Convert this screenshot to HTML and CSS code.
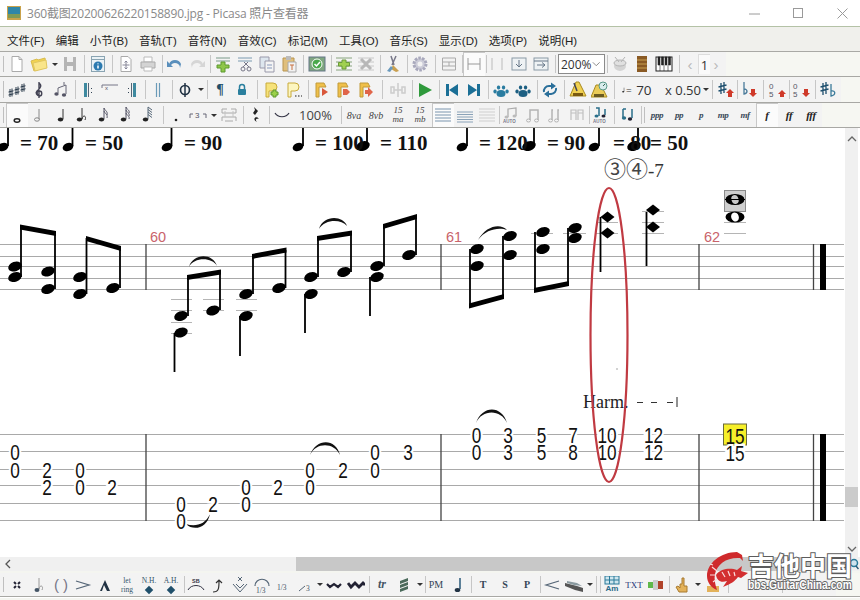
FILE: index.html
```html
<!DOCTYPE html>
<html lang="zh">
<head>
<meta charset="utf-8">
<title>Picasa 照片查看器</title>
<link rel="stylesheet" href="styles.css">
</head>
<body>
<svg class="defs" width="0" height="0">
  <defs>
    <ellipse id="h" rx="7" ry="4.700" transform="rotate(-20)"/>
    <ellipse id="hs" rx="5.500" ry="4" transform="rotate(-20)"/>
    <path id="d" d="M0-5.500 7 0 0 5.500-7 0Z"/>
    <path id="tn" d="M9 3v10.500" stroke="#888" fill="none"/>
  </defs>
</svg>
<div class="app">
  <header class="title">
    <svg class="appicon" viewBox="0 0 14 14"><rect width="14" height="14" fill="#c9a24a"/><rect x="1" y="1" width="12" height="7" fill="#2f86a8"/><rect x="1" y="8" width="12" height="4" fill="#7f9a55"/></svg>
    <span class="titletext">360截图20200626220158890.jpg - Picasa 照片查看器</span>
    <div class="winbtns">
      <svg viewBox="0 0 11 11"><path d="M0 6h11" /></svg>
      <svg viewBox="0 0 11 11"><rect x=".5" y=".5" width="9" height="9"/></svg>
      <svg viewBox="0 0 11 11"><path d="M.5.5l10 10M10.500.5l-10 10"/></svg>
    </div>
  </header>
  <nav class="menu">
    <span>文件(F)</span><span>编辑</span><span>小节(B)</span><span>音轨(T)</span><span>音符(N)</span><span>音效(C)</span><span>标记(M)</span><span>工具(O)</span><span>音乐(S)</span><span>显示(D)</span><span>选项(P)</span><span>说明(H)</span>
  </nav>

  <!-- toolbar 1 -->
  <div class="row"><div class="tb">
    <i class="grip"></i>
    <b class="c"><svg viewBox="0 0 18 18"><path d="M4 1.500h7l3 3v12H4z" fill="#fff" stroke="#aaa"/><path d="M11 1.500v3h3" fill="none" stroke="#aaa"/></svg></b>
    <b class="c"><svg viewBox="0 0 18 18"><path d="M1 6l6-2 1 1 7-2 1 9-12 4z" fill="#f2d34f" stroke="#d8bc50"/><path d="M3 8l13-3 1 8-12 3z" fill="#f9e58a" stroke="#e0c660"/></svg></b>
    <b class="ar"></b>
    <b class="c"><svg viewBox="0 0 18 18"><path d="M3 2h12v14H3z" fill="#b4b4b4"/><path d="M6 2h6v5H6zM6 11h6v5H6z" fill="#f0f0f0"/></svg></b>
    <i class="s s6"></i>
    <b class="c"><svg viewBox="0 0 18 18"><rect x="2.500" y="1.500" width="13" height="15" fill="#eaf2f6" stroke="#8aa4b2"/><path d="M2.500 4.500h13" stroke="#8aa4b2"/><circle cx="9" cy="11" r="4.500" fill="#2b7ab0"/><path d="M9 8.500v.8M9 10.500v3" stroke="#fff" stroke-width="1.500"/></svg></b>
    <i class="s s6"></i>
    <b class="c"><svg viewBox="0 0 18 18"><path d="M4 1.500h7l3 3v12H4z" fill="#fff" stroke="#aaa"/><path d="M9 6v8M5.500 10h7M7.500 7.500 9 6l1.500 1.500M7.500 12.500 9 14l1.500-1.500" fill="none" stroke="#889"/></svg></b>
    <b class="c"><svg viewBox="0 0 18 18"><path d="M5 2h8v5H5z" fill="#fff" stroke="#bbb"/><path d="M2 7h14v6H2z" fill="#d4d4d4" stroke="#aaa"/><path d="M5 12h8v4H5z" fill="#fff" stroke="#bbb"/></svg></b>
    <i class="s s5"></i>
    <b class="c"><svg viewBox="0 0 18 18"><path d="M3 9a6.500 6.500 0 0 1 12 0l-1 4a5 5 0 0 0-9-3l2 2H1V6l2 2" fill="#5a8fbc"/></svg></b>
    <b class="c"><svg viewBox="0 0 18 18"><path d="M15 9a6.500 6.500 0 0 0-12 0l1 4a5 5 0 0 1 9-3l-2 2h6V6l-2 2" fill="#d6d6d6"/></svg></b>
    <i class="s s4"></i>
    <b class="c"><svg viewBox="0 0 18 18"><path d="M2 3h14M2 6h14" stroke="#7a9a8a"/><path d="M7 7h4v3h4v3h-4v4H7v-4H3v-3h4z" fill="#8ec64a" stroke="#5d9a30"/></svg></b>
    <b class="c"><svg viewBox="0 0 18 18"><path d="M2 3h14M2 6h14" stroke="#7a9ab0"/><circle cx="7" cy="14" r="2" fill="none" stroke="#778"/><circle cx="13" cy="14" r="2" fill="none" stroke="#778"/><path d="M7 12 12 7M13 12 8 7" stroke="#778"/></svg></b>
    <b class="c"><svg viewBox="0 0 18 18"><path d="M2 2h9v11H2z" fill="#dde6ee" stroke="#99a"/><path d="M7 6h9v11H7z" fill="#f4f4f4" stroke="#99a"/><path d="M9 10h5M9 13h5" stroke="#89b"/></svg></b>
    <b class="c"><svg viewBox="0 0 18 18"><path d="M3 3h11v13H3z" fill="#e0bf7c" stroke="#b89550"/><path d="M6 1h5v4H6z" fill="#bbb"/><path d="M8 7h8v10H8z" fill="#f2f2f2" stroke="#aaa"/><path d="M10 10h4M12 10v5" stroke="#c87040"/></svg></b>
    <i class="s s6"></i>
    <b class="c"><svg viewBox="0 0 18 18"><rect x="1" y="2" width="16" height="14" fill="#7fa680" stroke="#678"/><circle cx="9" cy="9" r="5" fill="#4aa84a" stroke="#fff"/><path d="M6.500 9 8.500 11 12 7" fill="none" stroke="#fff" stroke-width="1.500"/></svg></b>
    <i class="s s5"></i>
    <b class="c"><svg viewBox="0 0 18 18"><path d="M1 3h16M1 7h16M1 11h16M1 15h16" stroke="#88a47e"/><path d="M7 5h4v2.500h3.500v3.500H11v3H7v-3H3.500V7.500H7z" fill="#a0d050" stroke="#6a9a3a"/></svg></b>
    <b class="c"><svg viewBox="0 0 18 18"><path d="M1 3h16M1 7h16M1 11h16M1 15h16" stroke="#c8c8c8"/><path d="M4 4l10 10M14 4 4 14" stroke="#b8b8b8" stroke-width="3"/></svg></b>
    <i class="s s5"></i>
    <b class="c"><svg viewBox="0 0 18 18"><path d="M7 1l3 9M12 1 8 10" stroke="#778" stroke-width="1.500"/><path d="M9 10l6 6-3 1-5-3z" fill="#c9a050"/><path d="M7 11 3 16l3 1 3-4z" fill="#6a9abd"/></svg></b>
    <i class="s s5"></i>
    <b class="c"><svg viewBox="0 0 18 18"><circle cx="9" cy="9" r="6" fill="#ccccd8" stroke="#a8a8bc" stroke-width="3" stroke-dasharray="2.500 1.200"/><circle cx="9" cy="9" r="2.500" fill="#f2f2f2"/></svg></b>
    <i class="s s7"></i>
    <b class="c"><svg viewBox="0 0 18 18"><path d="M2.500 3h13v12h-13zM2.500 7h13M2.500 11h13M9 7v4" fill="#f2f2f2" stroke="#aaa"/></svg></b>
    <i class="s s3"></i>
    <b class="c on"><svg viewBox="0 0 18 18"><path d="M3 3v12M15 3v12M3 9h12" fill="none" stroke="#999"/></svg></b>
    <i class="s s1"></i>
    <b class="c"><svg viewBox="0 0 18 18"><path d="M4 3v12M14 3v12" fill="none" stroke="#bbb"/></svg></b>
    <b class="c"><svg viewBox="0 0 18 18"><rect x="2" y="3" width="14" height="12" fill="#eef2f4" stroke="#8a9aa6"/><path d="M9 5v7M6 9l3 3 3-3" fill="none" stroke="#678"/></svg></b>
    <b class="c"><svg viewBox="0 0 18 18"><rect x="2" y="3" width="14" height="12" fill="#eef2f4" stroke="#8a9aa6"/><path d="M2 6h14M5 10h8M10 7.500 13 10l-3 2.500" fill="none" stroke="#678"/></svg></b>
    <i class="s s6"></i>
    <span class="combo">200%<svg viewBox="0 0 10 6"><path d="M1 1l4 4 4-4" fill="none" stroke="#777"/></svg></span>
    <i class="s s4"></i>
    <b class="c"><svg viewBox="0 0 18 18"><ellipse cx="9" cy="11" rx="6" ry="5" fill="#d4d4d4"/><ellipse cx="9" cy="8" rx="6" ry="3" fill="#e0e0e0" stroke="#b4b4b4"/><path d="M4 2l4 5M14 2l-4 5" stroke="#b4b4b4"/></svg></b>
    <b class="c"><svg viewBox="0 0 18 18"><rect x="4" y="1" width="10" height="16" fill="#8a5a24"/><path d="M4 5h10M4 9h10M4 13h10" stroke="#c8a050"/></svg></b>
    <b class="c"><svg viewBox="0 0 18 18"><rect x="1" y="2" width="16" height="14" fill="#fff" stroke="#222"/><path d="M3 2h2v8H3zM6.500 2h2v8h-2zM10 2h2v8h-2zM13.500 2h2v8h-2zM5 10v6M9 10v6M13 10v6" fill="#222" stroke="#222" stroke-width=".6"/></svg></b>
    <i class="s s7"></i>
    <span class="pg">‹</span><span class="pgn">1</span><span class="pg">›</span>
  </div></div>

  <!-- toolbar 2 -->
  <div class="row mid"><div class="tb t2">
    <i class="grip"></i>
    <b class="c"><svg viewBox="0 0 18 18" class="shp"><path d="M2 8v8M4 7.500v8M.5 11l5-1.200M.5 14l5-1.200M8 6v8M10 5.500v8M6.500 9l5-1.200M6.500 12l5-1.200M14 3v8M16 2.500v8M12.500 6l5-1.200M12.500 9l5-1.200"/></svg></b>
    <b class="c"><svg viewBox="0 0 18 18"><path d="M9 1v16M9 2c3 2 2 5-2 8-2 2 0 5 2.500 5 3 0 3-5 0-5s-3 3-1 4" fill="none" stroke="#445" stroke-width="1.400"/></svg></b>
    <b class="c"><svg viewBox="0 0 18 18"><path d="M6 12V7l8-3v9M12 1v3" fill="none" stroke="#667"/><ellipse cx="4.500" cy="13" rx="2.200" ry="1.700" fill="#556"/><ellipse cx="12" cy="14" rx="2.200" ry="1.700" fill="#556"/></svg></b>
    <i class="s s5"></i>
    <b class="c"><svg viewBox="0 0 18 18"><path d="M5 2h3v14H5z" fill="#3f8aa0"/><path d="M9.500 2v14" stroke="#567"/><path d="M12 7h1v1h-1zM12 11h1v1h-1z" fill="#345"/></svg></b>
    <b class="c"><svg viewBox="0 0 18 18"><path d="M1 7V4h16" fill="none" stroke="#778"/><text x="4" y="9" class="ti">x</text></svg></b>
    <b class="c"><svg viewBox="0 0 18 18"><path d="M10 2h3v14h-3z" fill="#3f8aa0"/><path d="M8.500 2v14" stroke="#567"/><path d="M5 7h1v1H5zM5 11h1v1H5z" fill="#345"/></svg></b>
    <i class="s s4"></i>
    <b class="c"><svg viewBox="0 0 18 18"><path d="M7.500 2v14M10.500 2v14" stroke="#6a9ab8" stroke-width="1.200"/></svg></b>
    <i class="s s5"></i>
    <b class="c"><svg viewBox="0 0 18 18"><ellipse cx="9" cy="9" rx="4.500" ry="4.500" fill="none" stroke="#234" stroke-width="1.700"/><path d="M9 2v14" stroke="#234" stroke-width="1.500"/></svg></b>
    <b class="ar"></b>
    <i class="s s4"></i>
    <b class="c g2">¶</b>
    <b class="c"><svg viewBox="0 0 18 18"><path d="M6.500 8V6a2.500 2.500 0 0 1 5 0v2" fill="none" stroke="#2a7f9e" stroke-width="1.500"/><rect x="5" y="8" width="8" height="6" rx="1" fill="#2a7f9e"/></svg></b>
    <i class="s s8"></i>
    <b class="c"><svg viewBox="0 0 18 18"><path d="M3 2h7a3.500 3.500 0 0 1 0 8H6v6H3z" fill="#f6e27a" stroke="#c8aa3a"/><path d="M10 9h3v2h2v3h-2v2h-3v-2H8v-3h2z" fill="#9ad04a" stroke="#5f982e"/></svg></b>
    <b class="c"><svg viewBox="0 0 18 18"><path d="M3 2h7a3.500 3.500 0 0 1 0 8H6v6H3z" fill="#fdf6c0" stroke="#c8aa3a"/><path d="M10 15h1.500M13 15h1.500M16 15h1" stroke="#666" stroke-width="1.500"/></svg></b>
    <i class="s s6"></i>
    <b class="c"><svg viewBox="0 0 18 18"><path d="M3 2h8l2 4H6v10H3z" fill="#f0c04a" stroke="#c09a3a"/><path d="M9 7l6 4-6 4z" fill="#d9573a"/></svg></b>
    <b class="c"><svg viewBox="0 0 18 18"><path d="M3 2h8l2 4H6v10H3z" fill="#f0c04a" stroke="#c09a3a"/><path d="M8 8h4l3 3-3 3H8z" fill="#e0654a"/></svg></b>
    <b class="c"><svg viewBox="0 0 18 18"><path d="M3 2h8l2 4H6v10H3z" fill="#f0c04a" stroke="#c09a3a"/><path d="M8 9h3V6l5 5-5 5v-3H8z" fill="#e0654a"/></svg></b>
    <i class="s s10"></i>
    <b class="c"><svg viewBox="0 0 18 18"><path d="M9 2v14M2 6h3v6H2zM13 6h3v6h-3zM5 9h8" fill="none" stroke="#cccccc" stroke-width="1.500"/></svg></b>
    <i class="s s5"></i>
    <b class="c"><svg viewBox="0 0 18 18"><path d="M3 2l13 7-13 7z" fill="#2f9a3c"/></svg></b>
    <i class="s s5"></i>
    <b class="c"><svg viewBox="0 0 18 18"><path d="M3 3h3v12H3zM15 3v12L6 9z" fill="#1b6f96"/></svg></b>
    <b class="c"><svg viewBox="0 0 18 18"><path d="M12 3h3v12h-3zM3 3v12l9-6z" fill="#1b6f96"/></svg></b>
    <i class="s s5"></i>
    <b class="c"><svg viewBox="0 0 18 18" class="paw"><path d="M3 8.500a1.700 2 0 1 0 .1 0M6.500 4.500a1.700 2 0 1 0 .1 0M11.500 4.500a1.700 2 0 1 0 .1 0M15 8.500a1.700 2 0 1 0 .1 0"/><ellipse cx="9" cy="12.500" rx="4.500" ry="3.500"/></svg></b>
    <b class="c"><svg viewBox="0 0 18 18" class="paw dark"><path d="M3 8.500a1.700 2 0 1 0 .1 0M6.500 4.500a1.700 2 0 1 0 .1 0M11.500 4.500a1.700 2 0 1 0 .1 0M15 8.500a1.700 2 0 1 0 .1 0"/><ellipse cx="9" cy="12.500" rx="4.500" ry="3.500"/></svg></b>
    <i class="s s5"></i>
    <b class="c"><svg viewBox="0 0 18 18"><path d="M3 11a5 5 0 0 1 5-6h3M15 7a5 5 0 0 1-5 6H7" fill="none" stroke="#2a6f9a" stroke-width="2"/><path d="M10 1.500 15 5l-5 3.500zM8 9.500 3 13l5 3.500z" fill="#2a6f9a"/></svg></b>
    <i class="s s6"></i>
    <b class="c"><svg viewBox="0 0 18 18"><path d="M7 1h3l7 14H1z" fill="#f0d050" stroke="#a88a20"/><path d="M4 12h10v3H4z" fill="#7a5a10"/><path d="M8 10 5 2" stroke="#445" stroke-width="1.500"/></svg></b>
    <b class="c"><svg viewBox="0 0 18 18"><path d="M5 4h5l6 12H0z" fill="#eacb58" stroke="#a88a20"/><path d="M3 13h10v3H3z" fill="#6a5a20"/><circle cx="12" cy="5" r="4" fill="#d8ecec" stroke="#5a9a8a"/><path d="M12 5l2-2" stroke="#365"/></svg></b>
    <i class="s s5"></i>
    <span class="tempo"><svg viewBox="0 0 10 20"><ellipse cx="4" cy="16" rx="3.500" ry="2.500" fill="#222"/><path d="M7 16V2" stroke="#222" stroke-width="1.500"/></svg><small>=</small> 70 <span class="x">x 0.50</span><b class="ar"></b></span>
    <i class="s s4"></i>
    <b class="c"><svg viewBox="0 0 18 18"><path d="M5 2v11M8 1v11M2.500 6l8-2M2.500 10l8-2" stroke="#1e4f6e" stroke-width="1.300"/><path d="M14 8l4 4h-2v4h-4v-4h-2z" fill="#cf3a2a"/></svg></b>
    <i class="s s1"></i>
    <b class="c"><svg viewBox="0 0 18 18"><path d="M5 1v12c4-1 4-5 0-5" fill="none" stroke="#4a7a9a" stroke-width="1.300"/><path d="M12 8h4v4h2l-4 4-4-4h2z" fill="#cf3a2a"/></svg></b>
    <i class="s s7"></i>
    <b class="c"><svg viewBox="0 0 18 18"><text x="1" y="8" class="nm">0</text><text x="1" y="16" class="nm">5</text><path d="M14 9l4 4h-2v3h-4v-3h-2z" fill="#cf3a2a"/></svg></b>
    <i class="s s2"></i>
    <b class="c"><svg viewBox="0 0 18 18"><text x="1" y="8" class="nm">0</text><text x="1" y="16" class="nm">5</text><path d="M12 8h4v4h2l-4 4-4-4h2z" fill="#cf3a2a"/></svg></b>
    <i class="s s5"></i>
    <b class="c"><svg viewBox="0 0 18 18"><path d="M4 2v12M7 1v12M1.500 6l8-2M1.500 10l8-2" stroke="#1e4f6e" stroke-width="1.300"/><path d="M12 3v12c5-1 5-6 0-5" fill="none" stroke="#3a7a9a" stroke-width="1.300"/></svg></b>
  </div></div>

  <!-- toolbar 3 -->
  <div class="row"><div class="tb t3">
    <i class="grip tall"></i>
    <b class="c on"><svg viewBox="0 0 18 18"><ellipse cx="9" cy="14.500" rx="2.800" ry="1.700" fill="none" stroke="#222" stroke-width="1.500"/></svg></b>
    <b class="c"><svg viewBox="0 0 18 18"><use href="#tn"/><ellipse cx="7" cy="13.500" rx="2.500" ry="1.700" fill="none" stroke="#888"/></svg></b>
    <b class="c"><svg viewBox="0 0 18 18"><path d="M11 3v10" stroke="#333"/><ellipse cx="8.500" cy="13.500" rx="2.700" ry="2" fill="#222"/></svg></b>
    <b class="c"><svg viewBox="0 0 18 18"><path d="M8 2v11c1-5 5-3 3 1" fill="none" stroke="#333"/><ellipse cx="5.500" cy="13.500" rx="2.700" ry="2" fill="#222"/></svg></b>
    <b class="c"><svg viewBox="0 0 18 18"><path d="M8 2v11M8 2c1 3 4 3 3 7M8 5c1 3 4 3 3 7" fill="none" stroke="#556"/><ellipse cx="5.500" cy="13.500" rx="2.700" ry="2" fill="#222"/></svg></b>
    <b class="c"><svg viewBox="0 0 18 18"><path d="M8 1v12M8 1c1 3 4 3 3 6M8 4c1 3 4 3 3 6M8 7c1 3 4 3 3 6" fill="none" stroke="#556"/><ellipse cx="5.500" cy="13.500" rx="2.700" ry="2" fill="#222"/></svg></b>
    <b class="c"><svg viewBox="0 0 18 18"><path d="M8 1v12M8 1l4 3M8 3.500l4 3M8 6l4 3M8 8.500l4 3" fill="none" stroke="#567"/><ellipse cx="5.500" cy="13.500" rx="2.700" ry="2" fill="#222"/></svg></b>
    <i class="s s5"></i>
    <b class="c"><svg viewBox="0 0 18 18"><circle cx="9" cy="14" r="1.300" fill="#222"/></svg></b>
    <b class="c"><svg viewBox="0 0 18 18"><path d="M1 12V8h3M14 8h3v4" fill="none" stroke="#667"/><text x="6" y="12" class="nm">3</text></svg></b>
    <b class="ar"></b>
    <b class="c"><svg viewBox="0 0 18 18"><path d="M2 3v4h14V3M2 3h5M11 3h5M2 15v-4h14v4M5 15h8" fill="none" stroke="#aaa"/><path d="M5 5v6M13 5v6" stroke="#c4c4c4"/></svg></b>
    <i class="s s5"></i>
    <b class="c"><svg viewBox="0 0 18 18"><path d="M7 1l4 4-3 4 4 4c-3-1-4 1-2 3-4-2-3-5 0-5L6 7l2-3z" fill="#222"/></svg></b>
    <i class="s s4"></i>
    <b class="c"><svg viewBox="0 0 18 18"><path d="M2 7c3 5 11 5 14 0" fill="none" stroke="#334" stroke-width="1.200"/></svg></b>
    <span class="pct">100%</span>
    <i class="s s5"></i>
    <b class="c it">8va</b>
    <b class="c it">8vb</b>
    <b class="c it st"><span>15</span><span>ma</span></b>
    <b class="c it st"><span>15</span><span>mb</span></b>
    <i class="s s1"></i>
    <b class="c on"><svg viewBox="0 0 18 18"><path d="M1 3h16M1 6h16M1 9h16M1 12h16M1 15h16" stroke="#7a95ae"/></svg></b>
    <b class="c"><svg viewBox="0 0 18 18"><path d="M1 6h16M1 8.500h16M1 11h16M1 13.500h16M1 16h16" stroke="#8aa2b8"/></svg></b>
    <b class="c"><svg viewBox="0 0 18 18"><path d="M1 3h16M1 6h16M1 9h16M1 12h16M1 15h16" stroke="#cfcfcf"/></svg></b>
    <i class="s s2"></i>
    <b class="c"><svg viewBox="0 0 18 18"><path d="M6 11V3l8-1v8" fill="none" stroke="#aaa" stroke-width="1.200"/><ellipse cx="4.500" cy="11" rx="2" ry="1.500" fill="#bbb"/><ellipse cx="12.500" cy="10" rx="2" ry="1.500" fill="#bbb"/><text x="1" y="17" class="au">AUTO</text></svg></b>
    <b class="c"><svg viewBox="0 0 18 18"><path d="M6 14V4h8v10" fill="none" stroke="#b4b4b4" stroke-width="1.500"/><ellipse cx="4.500" cy="14.500" rx="2" ry="1.500" fill="none" stroke="#b4b4b4"/><ellipse cx="12.500" cy="14.500" rx="2" ry="1.500" fill="none" stroke="#b4b4b4"/></svg></b>
    <b class="c"><svg viewBox="0 0 18 18"><path d="M6 14V4h1M12 14V4h1" fill="none" stroke="#b4b4b4" stroke-width="1.500"/><ellipse cx="4.500" cy="14.500" rx="2" ry="1.500" fill="none" stroke="#b4b4b4"/><ellipse cx="10.500" cy="14.500" rx="2" ry="1.500" fill="none" stroke="#b4b4b4"/></svg></b>
    <b class="c"><svg viewBox="0 0 18 18"><path d="M3 14V4h5v10M10 14V4h5v10M3 7h5M10 7h5" fill="none" stroke="#c0c0c0" stroke-width="1.200"/></svg></b>
    <i class="s s2"></i>
    <b class="c"><svg viewBox="0 0 18 18"><path d="M4 2h3v8M13 3v6" fill="none" stroke="#2a6f8a" stroke-width="1.500"/><ellipse cx="4.500" cy="10" rx="2" ry="1.500" fill="#2a6f8a"/><ellipse cx="11.500" cy="10" rx="2" ry="1.500" fill="#223"/><text x="1" y="17" class="au">AUTO</text></svg></b>
    <i class="s s4"></i>
    <b class="c"><svg viewBox="0 0 18 18"><path d="M5 3h3M5 3v8M14 3v9" fill="none" stroke="#2a6f8a" stroke-width="1.500"/><ellipse cx="6" cy="12" rx="2.200" ry="1.700" fill="#2a6f8a"/><ellipse cx="12" cy="13" rx="2.200" ry="1.700" fill="#223"/></svg></b>
    <i class="s s6"></i>
    <i class="grip tall small"></i>
    <b class="c dyn">ppp</b>
    <b class="c dyn">pp</b>
    <b class="c dyn">p</b>
    <b class="c dyn">mp</b>
    <b class="c dyn">mf</b>
    <b class="c dyn on big">f</b>
    <b class="c dyn big">ff</b>
    <b class="c dyn big">fff</b>
  </div></div>

  <main class="main">
    <svg class="score" viewBox="0 128 845 429" width="845" height="429">
      <!-- staff -->
      <g class="lines">
        <path d="M0 244.500H844M0 256.500H844M0 266.500H844M0 278.500H844M0 289.500H844"/>
        <path d="M0 434.500H844M0 451.500H844M0 469.500H844M0 485.500H844M0 503.500H844M0 520.500H844"/>
      </g>
      <path class="ledger" d="M171 299.500h21M171 310.500h21M171 322.500h21M171 333.500h21M203 299.500h21M203 310.500h21M236 299.500h21M236 310.500h21M531 233.500h22M563 233.500h23M596 222.500h22M596 233.500h22M642 211.500h22M642 222.500h22M642 233.500h22M724 222.500h22M724 233.500h22"/>
      <path class="bar" d="M146 244v46M441 244v46M699 244v46M813.500 244v46M146 434v87M441 434v87M699 434v87M813.500 434v87"/>
      <path class="thick" d="M820 244h6v46h-6zM820 434h6v87h-6z"/>

      <!-- tempo row -->
      <g class="stem">
        <path d="M8 128v18M72.500 128v18M171.500 128v18M303 128v18M367 128v18M467 128v18M534 128v18M599 128v18M638 128v18"/>
      </g>
      <g class="heads">
        <use href="#hs" x="3" y="147"/><use href="#hs" x="68" y="147"/><use href="#hs" x="167" y="147"/><use href="#hs" x="298" y="147"/><use href="#h" x="363" y="146"/><use href="#hs" x="462" y="147"/><use href="#h" x="529" y="146"/><use href="#hs" x="594" y="147"/><use href="#h" x="634" y="146"/>
      </g>
      <g class="tempo-t">
        <text x="20" y="150">= 70</text><text x="85" y="150">= 50</text><text x="184" y="150">= 90</text><text x="315" y="150">= 100</text><text x="380" y="150">= 110</text><text x="479" y="150">= 120</text><text x="547" y="150">= 90</text><text x="613" y="150">= 80</text><text x="650" y="150">= 50</text>
      </g>
      <text x="604" y="177" class="circ">③④<tspan class="circ2">-7</tspan></text>

      <!-- numbers -->
      <g class="num"><text x="150" y="242">60</text><text x="446" y="242">61</text><text x="704" y="242">62</text></g>

      <!-- stems -->
      <g class="stem">
        <path d="M21 227v50M55 232v57M86.500 238v56M120 247v41M188 277v39M220 272v38M174.500 333v39M253 256v38M285.500 250v38M240 316v40M318 238v39M351 233v39M305 294v39M384 226v40M416 216v39M370 277v39M470 249v58M503 236v60M535 232v58M568 228v55M600.500 217v55M646.500 212v54"/>
      </g>
      <g class="beam">
        <polygon points="20,224.500 56,231 56,236 20,229.500"/>
        <polygon points="86,236 121,246 121,251 86,241"/>
        <polygon points="187,275 221,269.500 221,274.500 187,280"/>
        <polygon points="252,254 286.500,247.500 286.500,252.500 252,259"/>
        <polygon points="317,236 352,230.500 352,235.500 317,241"/>
        <polygon points="383,224 417,214 417,219 383,229"/>
        <polygon points="469,303.500 504,294 504,299 469,308.500"/>
        <polygon points="534,288 569,281 569,286 534,293"/>
      </g>
      <g class="heads">
        <use href="#h" x="15" y="266.500"/><use href="#h" x="15" y="277"/><use href="#h" x="48" y="271.500"/><use href="#h" x="48" y="289"/>
        <use href="#h" x="80" y="277"/><use href="#h" x="80" y="294"/><use href="#h" x="113" y="288"/>
        <use href="#h" x="181" y="316"/><use href="#h" x="181" y="332.500"/><use href="#h" x="213" y="310.500"/>
        <use href="#h" x="246" y="294"/><use href="#h" x="246" y="316"/><use href="#h" x="279" y="288"/>
        <use href="#h" x="311" y="277"/><use href="#h" x="311" y="294"/><use href="#h" x="344" y="272"/>
        <use href="#h" x="377" y="266"/><use href="#h" x="377" y="277"/><use href="#h" x="409" y="255"/>
        <use href="#h" x="477" y="249"/><use href="#h" x="477" y="266"/><use href="#h" x="510" y="236"/><use href="#h" x="510" y="255"/>
        <use href="#h" x="543" y="232"/><use href="#h" x="543" y="249"/><use href="#h" x="575" y="228"/><use href="#h" x="575" y="238"/>
        <use href="#d" x="607.500" y="217"/><use href="#d" x="607.500" y="233"/><use href="#d" x="653" y="210"/><use href="#d" x="653" y="227"/>
      </g>
      <!-- slurs -->
      <g class="slur">
        <path d="M189 267C193 253 213 253 217 266C212 257 194 257 189 267Z"/>
        <path d="M319 229C323 215 343 215 347 226C341 219 325 219 319 229Z"/>
        <path d="M478 240C486 226 500 223 507 230C499 227 486 229 478 240Z"/>
        <path d="M310 455C316 438 336 438 340 455C334 442 316 442 310 455Z"/>
        <path d="M186 524C195 527 205 525 210 514C207 529 193 531 186 524Z"/>
        <path d="M476 423C482 405 502 405 507 423C501 409 482 409 476 423Z"/>
      </g>
      <!-- whole notes -->
      <rect x="724.500" y="190.500" width="21" height="21" class="hl"/>
      <g class="whole">
        <ellipse cx="735" cy="199.500" rx="9.500" ry="5.500"/><ellipse cx="735" cy="217" rx="9.500" ry="5.500"/>
      </g>
      <ellipse class="wholeg" cx="735" cy="199.500" rx="3.500" ry="4.500" transform="rotate(-20 735 199.500)"/>
      <ellipse class="wholew" cx="735" cy="217" rx="3.800" ry="4.600" transform="rotate(-20 735 217)"/>
      <path class="wline" d="M725 199.500h20"/>

      <!-- tab -->
      <rect x="723.500" y="424" width="23" height="21" class="ylw"/>
      <defs>
        <g id="nums">
          <text x="15" y="460">0</text><text x="15" y="478">0</text><text x="47" y="478">2</text><text x="47" y="495">2</text><text x="80" y="478">0</text><text x="80" y="495">0</text><text x="112" y="495">2</text>
          <text x="181" y="512">0</text><text x="181" y="529">0</text><text x="213" y="512">2</text><text x="246" y="495">0</text><text x="246" y="512">0</text><text x="278" y="495">2</text><text x="310" y="478">0</text><text x="310" y="495">0</text><text x="343" y="478">2</text><text x="375" y="460">0</text><text x="375" y="478">0</text><text x="408" y="460">3</text>
          <text x="476.500" y="443">0</text><text x="476.500" y="460">0</text><text x="508" y="443">3</text><text x="508" y="460">3</text><text x="541.500" y="443">5</text><text x="541.500" y="460">5</text><text x="573" y="443">7</text><text x="573" y="460">8</text><text x="607" y="443">10</text><text x="607" y="460">10</text><text x="653.500" y="443">12</text><text x="653.500" y="460">12</text>
          <text x="735" y="461">15</text>
        </g>
      </defs>
      <use href="#nums" class="halo"/>
      <use href="#nums" class="tabn"/>
      <text x="735" y="444" class="tabn hi">15</text>

      <!-- harm -->
      <text x="583" y="408" class="harm">Harm.</text>
      <path class="dash" d="M637 402.500h6M651 402.500h6M667 402.500h6"/>
      <path class="dashv" d="M677 397v10"/>

      <!-- red ellipse -->
      <ellipse cx="609" cy="335" rx="18.500" ry="147" class="ring"/>
      <circle cx="617" cy="369" r=".8" fill="#999"/>
    </svg>
    <div class="vscroll">
      <svg viewBox="0 0 10 6"><path d="M1 5l4-4 4 4" fill="none" stroke="#666" stroke-width="1.300"/></svg>
      <div class="vthumb"></div>
      <svg viewBox="0 0 10 6"><path d="M1 1l4 4 4-4" fill="none" stroke="#666" stroke-width="1.300"/></svg>
    </div>
  </main>

  <div class="hscroll">
    <svg viewBox="0 0 6 10"><path d="M5 1 1 5l4 4" fill="none" stroke="#555" stroke-width="1.300"/></svg>
    <div class="hthumb"></div>
    <svg class="mag" viewBox="0 0 10 12"><circle cx="5" cy="5" r="3.500" fill="#cfe3ee" stroke="#2a7a9a" stroke-width="1.500"/><path d="M7 8l2.500 3" stroke="#2a5a7a" stroke-width="1.500"/></svg>
  </div>

  <!-- bottom toolbar -->
  <div class="row bottom"><div class="tb">
    <i class="grip"></i>
    <b class="c"><svg viewBox="0 0 18 18"><path d="M6 6l2 2M12 6l-2 2M6 12l2-2M12 12l-2-2" stroke="#223" stroke-width="2"/></svg></b>
    <b class="c"><svg viewBox="0 0 18 18"><path d="M9 2v11c1-5 5-3 3 1" fill="none" stroke="#999"/><ellipse cx="7" cy="14" rx="2.500" ry="2" fill="#456"/></svg></b>
    <b class="c g3">( )</b>
    <b class="c"><svg viewBox="0 0 18 18"><path d="M2 5l13 4-13 4" fill="none" stroke="#567" stroke-width="1.300"/></svg></b>
    <b class="c"><svg viewBox="0 0 18 18"><path d="M4 15 9 4l5 11-3 0-3-6-2 6z" fill="#234"/></svg></b>
    <b class="c st ser"><span>let</span><span>ring</span></b>
    <b class="c st ser dia"><span>N.H.</span><em></em></b>
    <b class="c st ser dia"><span>A.H.</span><em></em></b>
    <i class="s s3"></i>
    <b class="c"><svg viewBox="0 0 18 18"><text x="5" y="7" class="sb">SB</text><path d="M1 14c3-6 13-6 16 0" fill="none" stroke="#334"/></svg></b>
    <b class="c"><svg viewBox="0 0 18 18"><path d="M4 16c6 0 6-4 6-11M7 7l3-3 3 3" fill="none" stroke="#333" stroke-width="1.200"/></svg></b>
    <b class="c"><svg viewBox="0 0 18 18"><path d="M2 8l7 8 7-8M5 8l4 4 4-4" fill="none" stroke="#567"/><path d="M7 1l4 4M11 1 7 5" stroke="#567"/></svg></b>
    <b class="c"><svg viewBox="0 0 18 18"><path d="M2 10c0-9 14-9 14 0" fill="none" stroke="#567" stroke-width="1.200"/><text x="3" y="17" class="fr">1/3</text></svg></b>
    <b class="c"><svg viewBox="0 0 18 18"><text x="2" y="14" class="fr">1/3</text></svg></b>
    <b class="c"><svg viewBox="0 0 18 18"><path d="M2 15l6-5" stroke="#567"/><text x="9" y="15" class="fr">3</text></svg></b>
    <b class="ar short"></b>
    <b class="c"><svg viewBox="0 0 18 18"><path d="M2 8l3 3 4-3 4 3 3-3" fill="none" stroke="#223" stroke-width="2.200"/></svg></b>
    <b class="c"><svg viewBox="0 0 18 18"><path d="M1 7l3 4 4-4 4 4 4-4 2 2" fill="none" stroke="#223" stroke-width="2.800"/></svg></b>
    <i class="s s4"></i>
    <b class="c tr">tr</b>
    <b class="c"><svg viewBox="0 0 18 18"><path d="M5 5l8-3v3l-8 3zM5 9l8-3v3l-8 3zM5 13l8-3v3l-8 3z" fill="#4a6a5a"/></svg></b>
    <b class="ar"></b>
    <i class="s s1"></i>
    <b class="c ser2">PM</b>
    <b class="c"><svg viewBox="0 0 18 18"><path d="M11 2v11" stroke="#2a5a7a" stroke-width="1.500"/><ellipse cx="8.500" cy="14" rx="2.800" ry="2" fill="#234"/></svg></b>
    <i class="s s3"></i>
    <b class="c ser2 bold">T</b>
    <b class="c ser2 bold">S</b>
    <b class="c ser2 bold">P</b>
    <i class="s s3"></i>
    <b class="c"><svg viewBox="0 0 18 18"><path d="M16 5 3 9l13 4" fill="none" stroke="#567" stroke-width="1.200"/></svg></b>
    <b class="c"><svg viewBox="0 0 18 18"><path d="M0 7l12 3 6 2v4l-8-2-10-4z" fill="#555"/><path d="M2 5l10 2 5 3-8-1-7-2z" fill="#8a9aa0"/></svg></b>
    <b class="ar"></b>
    <i class="s s4"></i>
    <i class="s s3"></i>
    <b class="c st am"><svg viewBox="0 0 18 9"><rect x="2" y="0" width="14" height="8" fill="#cfe6ee" stroke="#2a7a9a"/><path d="M6.500 0v8M11 0v8M2 4h14" stroke="#2a7a9a"/></svg><span>Am</span></b>
    <b class="c txt">TXT</b>
    <b class="c"><svg viewBox="0 0 18 18"><rect x="1" y="6" width="5" height="6" fill="#5fb84a"/><rect x="6" y="4" width="5" height="10" fill="#ccc"/><rect x="11" y="5" width="5" height="8" fill="#b0432a"/></svg></b>
    <i class="s s4"></i>
    <b class="c"><svg viewBox="0 0 18 18"><path d="M9 2h2v8h3v6H6l-3-5 2-1 2 2V8h2z" fill="#e3b25a" stroke="#a87a30"/></svg></b>
    <b class="ar"></b>
    <b class="c"><svg viewBox="0 0 18 18"><path d="M3 10h12v6H3z" fill="#e3b25a"/></svg></b>
    <i class="s s7"></i>
    <b class="blank"></b><i class="s s1"></i><b class="blank"></b>
  </div></div>
  <div class="foot"></div>

  <!-- watermark -->
  <div class="wm">
    <svg class="dragon" viewBox="0 0 42 40">
      <path d="M30 1C14 1 0 12 0 25c0 6 4 12 10 14-2-6-3-11-2-16C10 13 20 6 33 7l3 3-1-6z" fill="#cf2a2c"/>
      <path d="M9 24c5-7 15-7 21-5l5-4-1 5 7 2-7 5-3-1c-3 4-7 7-15 10l4-6c-6 2-10 0-11-6z" fill="#d32f30"/>
      <path d="M5 16l5 4M3 24l6 0M6 31l4-3M15 21l3 5M21 20l2 5M27 21l1 4M3 13l3 1" stroke="#f9dcdc" stroke-width="1.200"/>
    </svg>
    <div class="wmtext">
      <div class="wm1">吉他中国</div>
      <div class="wm2">bbs.GuitarChina.com</div>
    </div>
  </div>
</div>
</body>
</html>
```
FILE: styles.css
```css
* { box-sizing: border-box; }
html, body { margin: 0; padding: 0; }
body { background: #fff; font-family: "Liberation Sans", "Noto Sans CJK SC", sans-serif; overflow: hidden; }
.defs { position: absolute; }
.app { position: relative; width: 860px; height: 600px; display: flex; flex-direction: column; overflow: hidden; background: #f4f5f0; }

.title { height: 27px; flex: none; display: flex; align-items: center; background: #fff; padding-left: 7px; border-bottom: 1px solid #b4c2a6; }
.appicon { width: 14px; height: 14px; margin-right: 6px; }
.titletext { font: 12px "Open Sans", "Noto Sans CJK SC", sans-serif; color: #8a8a8a; white-space: nowrap; letter-spacing: -.2px; }
.winbtns { margin-left: auto; display: flex; gap: 33px; padding-right: 12px; }
.winbtns svg { width: 11px; height: 11px; fill: none; stroke: #9a9a9a; }

.menu { height: 25px; flex: none; display: flex; align-items: center; gap: 11px; background: #f0f0ec; border-bottom: 1px solid #a9a9a5; font: 11.500px "Liberation Sans", "Noto Sans CJK SC", sans-serif; color: #222; padding: 1px 0 0 7px; white-space: nowrap; }

.row { height: 25px; flex: none; display: flex; background: #f6f7f2; border-bottom: 1px solid #a8a8a4; }
.row.mid { height: 26px; }
.tb { display: flex; align-items: center; height: 100%; background: #f3f3f3; padding-right: 4px; }
.t2 { padding-right: 2px; }
.t3 { padding-right: 0; }

.c { flex: none; width: 22px; height: 100%; display: flex; align-items: center; justify-content: center; font-weight: 400; }
.c svg { width: 18px; height: 18px; }
.c.on { background: #fbfbfb; box-shadow: inset 1px 1px 0 #c8c8c8; }
.grip { flex: none; width: 6px; height: 100%; position: relative; }
.grip::before { content: ""; position: absolute; left: 3px; top: 4px; bottom: 4px; width: 1px; background: #bfbfbf; }
.grip.small { width: 2px; }
.grip.small::before { left: 0; }
.ar { flex: none; width: 9px; height: 100%; display: flex; align-items: center; justify-content: center; }
.ar::before { content: ""; border: 3px solid transparent; border-top: 3px solid #333; border-bottom: 0; }
.ar.short { width: 6px; }
.s { flex: none; height: 100%; position: relative; display: block; }
.s::before { content: ""; position: absolute; left: 50%; top: 3px; bottom: 3px; width: 1px; background: #c6c6c6; }
.s1 { width: 1px; } .s2 { width: 2px; } .s3 { width: 3px; } .s4 { width: 4px; } .s5 { width: 5px; }
.s6 { width: 6px; } .s7 { width: 7px; } .s8 { width: 8px; } .s10 { width: 10px; }

.combo { flex: none; width: 47px; height: 20px; border: 1px solid #8b8b8b; background: #fff; font: 12px "Open Sans", sans-serif; color: #333; display: flex; align-items: center; justify-content: space-between; padding: 0 4px 0 2px; }
.combo svg { width: 10px; height: 6px; }
.pg { flex: none; width: 16px; text-align: center; font-size: 15px; color: #b8b8b8; }
.pg:last-child { width: 12px; }
.pgn { flex: none; width: 12px; height: 20px; border: 1px solid #ddd; border-right: 0; border-bottom: 0; background: #fafafa; font: 13px "Open Sans", sans-serif; color: #333; text-align: center; line-height: 20px; }

.shp { fill: none; stroke: #2a3a4a; stroke-width: 1; }
.g2 { font: bold 14px "Liberation Serif", serif; color: #1f4f6a; }
.g3 { font: 15px "Liberation Sans", sans-serif; color: #778; }
.ti { font: 6px "Liberation Sans", sans-serif; fill: #556; }
.nm { font: 8px "Liberation Sans", sans-serif; fill: #556; }
.au { font: bold 4.500px "Liberation Sans", sans-serif; fill: #778; }
.sb { font: bold 5.500px "Liberation Sans", sans-serif; fill: #334; }
.fr { font: 7.500px "Liberation Serif", serif; fill: #456; }

.paw { fill: #2a7ca0; }
.paw.dark { fill: #1d5f82; }
.tempo { flex: none; width: 94px; height: 100%; display: flex; align-items: center; font: 13.500px "Open Sans", sans-serif; color: #333; white-space: pre; padding-left: 6px; }
.tempo svg { width: 10px; height: 20px; }
.tempo small { font-size: 10px; margin: 0 1px 0 1px; }
.tempo .x { margin-left: 10px; font-size: 13px; }
.pct { flex: none; width: 45px; text-align: center; font: 13px "Open Sans", sans-serif; color: #444; }
.it { font: italic 10px "Liberation Serif", serif; color: #444; }
.st { flex-direction: column; line-height: 9px; }
.it.st { font-size: 9px; }
.dyn { font: italic bold 9px "Liberation Serif", serif; color: #3a4a5a; letter-spacing: -.4px; }
.dyn.big { font-size: 11px; color: #222; }
.ser { font: 7.500px "Liberation Serif", serif; color: #34566a; }
.dia em { width: 6px; height: 6px; background: #1f4f6a; transform: rotate(45deg); margin-top: 2px; }
.tr { font: italic bold 12px "Liberation Serif", serif; color: #456; }
.ser2 { font: 10px "Liberation Serif", serif; color: #345; }
.bold { font-weight: bold; }
.am { font: bold 8px "Liberation Sans", sans-serif; color: #2a6a8a; line-height: 8px; }
.am svg { height: 9px; }
.txt { font: 9px "Liberation Serif", serif; color: #237; }
.blank { flex: none; width: 50px; }

.main { flex: none; height: 429px; display: flex; background: #fff; }
.score { flex: none; display: block; }
.lines path { fill: none; stroke: #a9a9a9; stroke-width: 1; }
.ledger { fill: none; stroke: #b5b5b5; }
.bar { fill: none; stroke: #444; stroke-width: 1.300; }
.thick { fill: #000; stroke: none; }
.stem path { fill: none; stroke: #000; stroke-width: 1.800; }
.heads { fill: #000; }
.beam { fill: #000; }
.slur { fill: #111; }
.tempo-t text { font: bold 21px "Liberation Serif", serif; fill: #111; }
.circ { font: 22px "Noto Sans CJK SC", sans-serif; fill: #444; }
.circ2 { font: 19px "Liberation Serif", serif; fill: #333; }
.num text { font: 14.500px "Liberation Sans", sans-serif; fill: #c9636b; }
.hl { fill: #cfcfcf; stroke: #8a8a8a; }
.whole { fill: #000; }
.wholeg { fill: #c8c8c8; }
.wholew { fill: #fff; }
.wline { fill: none; stroke: #000; stroke-width: 1; }
.ylw { fill: #f6ef2a; stroke: #6a6a3a; }
#nums text, .tabn.hi { font: 21.500px "Liberation Sans", sans-serif; text-anchor: middle; transform-box: fill-box; transform-origin: center; transform: scaleX(.8); }
.halo { fill: #fff; stroke: #fff; stroke-width: 5px; }
.tabn { fill: #111; }
.harm { font: 18px "Liberation Serif", serif; fill: #222; }
.dash { fill: none; stroke: #333; stroke-width: 1.200; }
.dashv { fill: none; stroke: #222; stroke-width: 1; }
.ring { fill: none; stroke: #c03a42; stroke-width: 2.200; }

.vscroll { flex: none; width: 13px; background: #f0f0f0; display: flex; flex-direction: column; align-items: center; padding: 8px 0 5px; }
.vscroll svg { width: 10px; height: 6px; flex: none; }
.vthumb { flex: none; width: 13px; height: 20px; background: #cbcbcb; margin-top: 345px; margin-bottom: 39px; }

.hscroll { height: 14px; flex: none; display: flex; align-items: center; background: #f0f0f0; padding-left: 5px; margin-bottom: 2px; }
.hscroll svg { width: 6px; height: 10px; flex: none; }
.hthumb { flex: none; width: 549px; height: 14px; margin-left: 285px; background: #c8c8c8; }
.hscroll .mag { width: 10px; height: 12px; margin-left: 4px; }

.bottom { height: 24px; }
.foot { flex: 1; background: #f4f5f0; border-top: 1px solid #fff; }

.wm { position: absolute; left: 707px; top: 551px; display: flex; }
.dragon { width: 42px; height: 40px; flex: none; }
.wmtext { margin-left: -1px; width: 105px; }
.wm1 { font: bold 26px/27px "Noto Sans CJK SC", sans-serif; color: #fff; -webkit-text-stroke: 2px #5c5c5c; paint-order: stroke fill; white-space: nowrap; }
.wm2 { font: bold 13.500px/13px "Liberation Sans", sans-serif; color: #fff; -webkit-text-stroke: 2px #666; paint-order: stroke fill; white-space: nowrap; transform: scaleX(.76); transform-origin: left center; width: 138px; }
```
